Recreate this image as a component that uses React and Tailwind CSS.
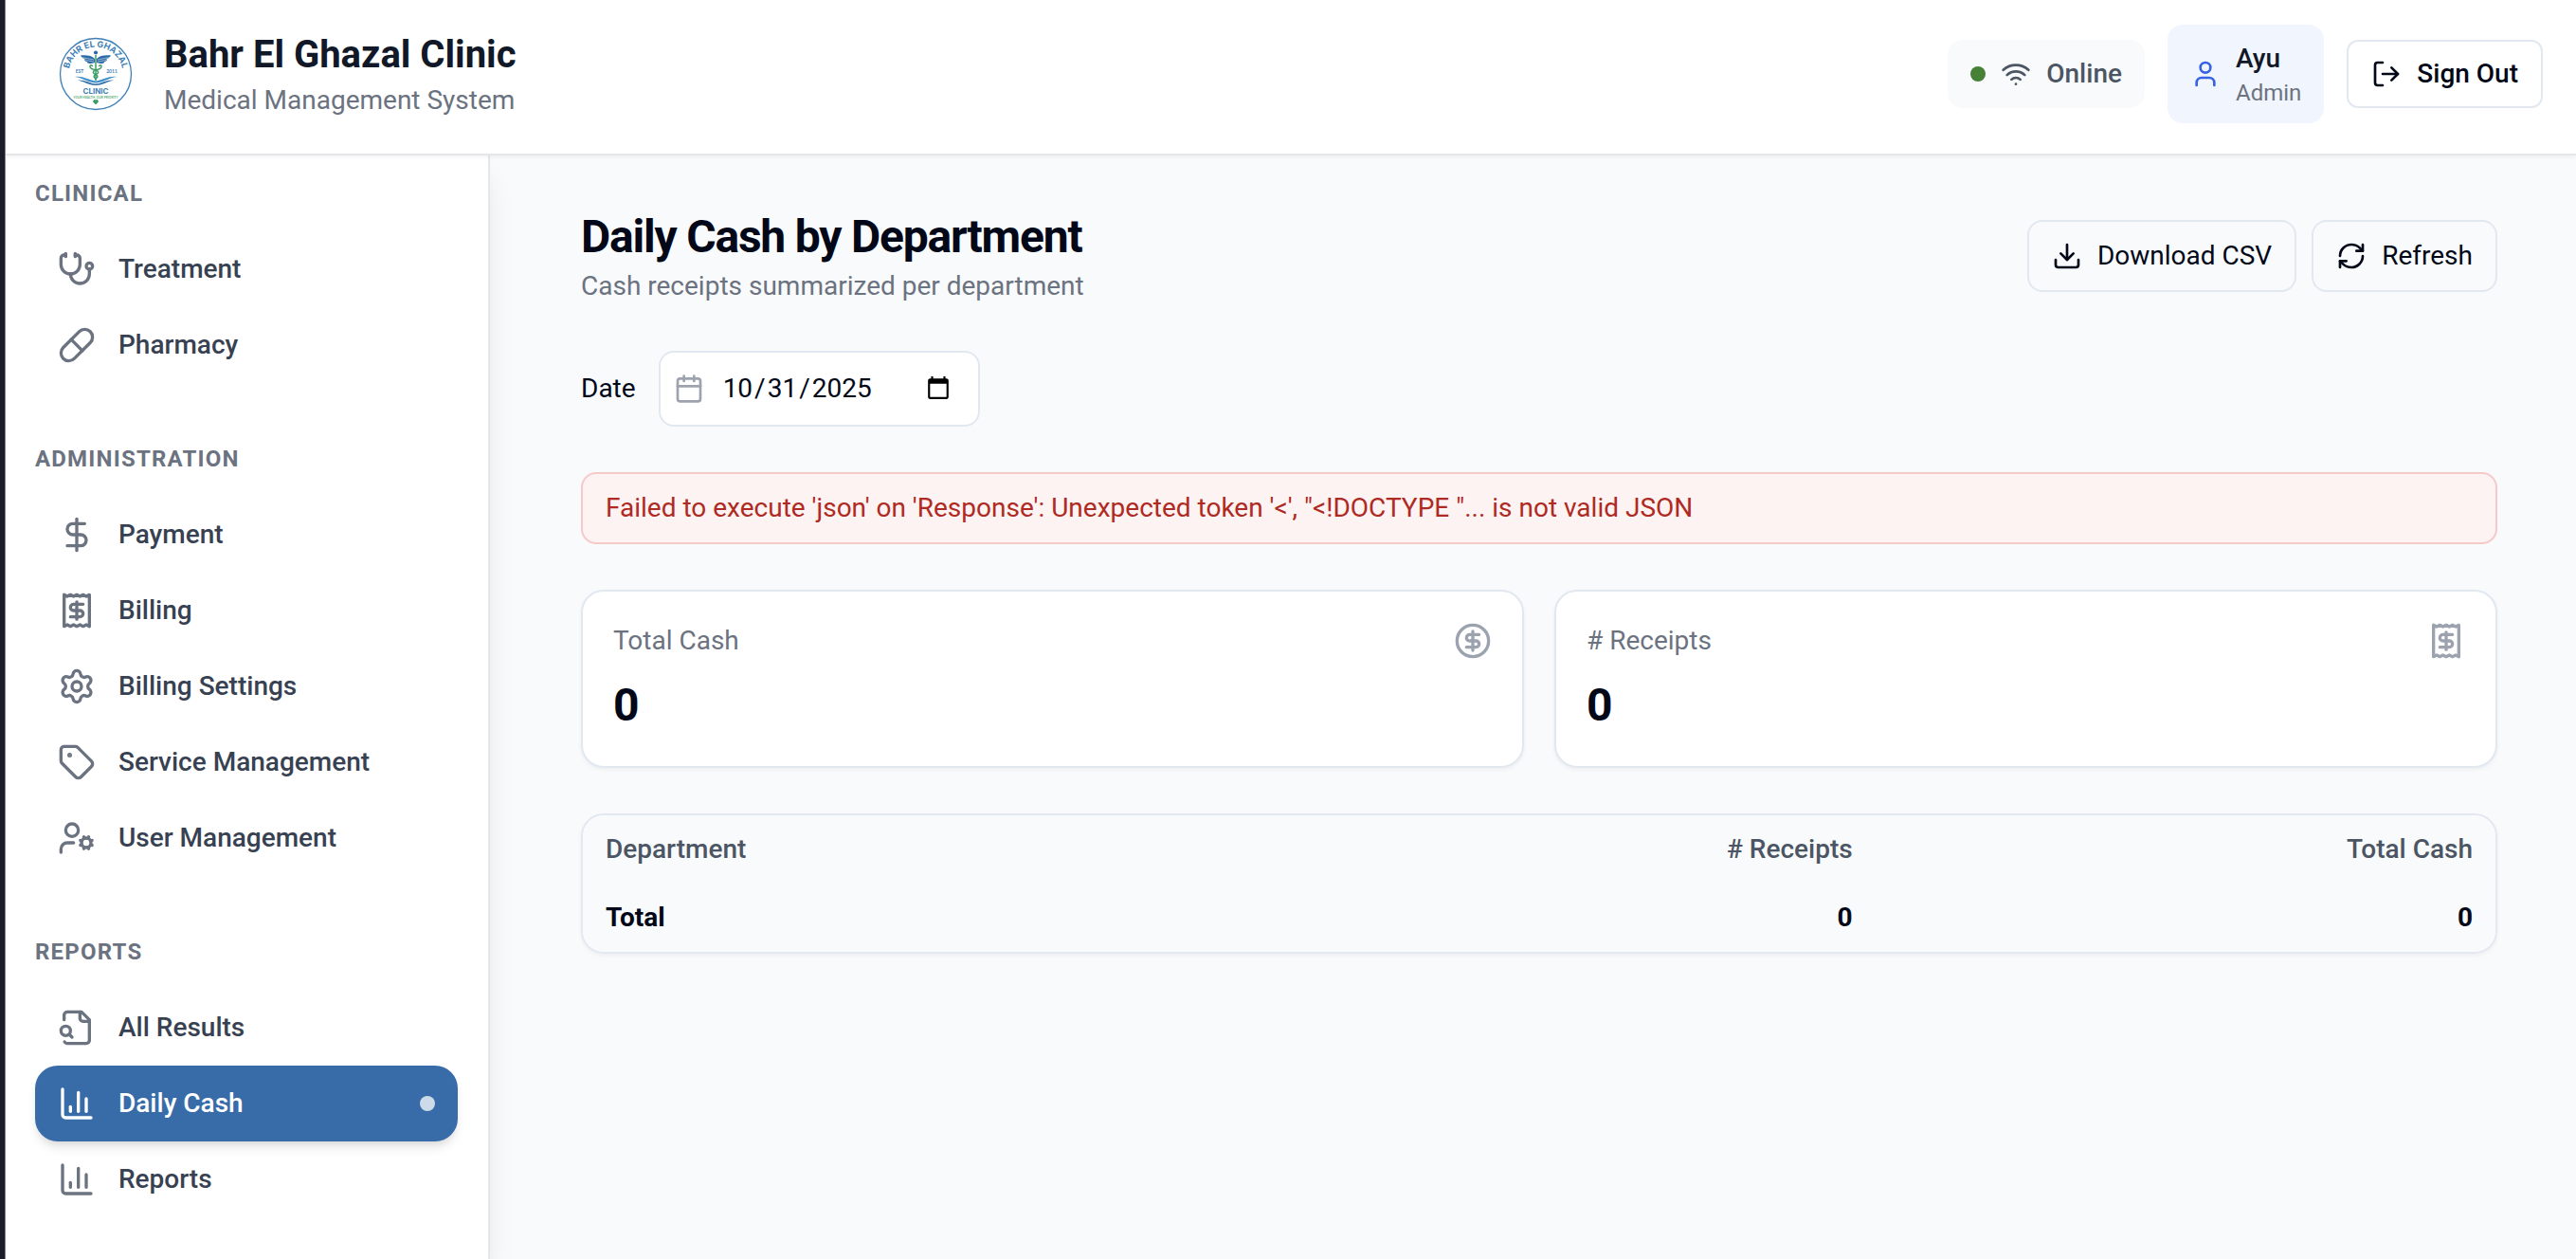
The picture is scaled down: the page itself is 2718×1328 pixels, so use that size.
import {
  Stethoscope, Pill, DollarSign, Settings, Tag, UserCog,
  Wifi, User, LogOut, Download, RefreshCw, Calendar, CircleDollarSign,
} from "lucide-react";

function Glyph({ className, children }) {
  return (
    <svg viewBox="0 0 24 24" fill="none" stroke="currentColor" strokeWidth="2" strokeLinecap="round" strokeLinejoin="round" className={className} aria-hidden="true">
      {children}
    </svg>
  );
}

function ChartBars({ className }) {
  return (
    <Glyph className={className}>
      <path d="M3 3v16a2 2 0 0 0 2 2h16" />
      <path d="M18 17V9" />
      <path d="M13 17V5" />
      <path d="M8 17v-3" />
    </Glyph>
  );
}

function ReceiptDollar({ className }) {
  return (
    <Glyph className={className}>
      <path d="M4 2v20l2-1 2 1 2-1 2 1 2-1 2 1 2-1 2 1V2l-2 1-2-1-2 1-2-1-2 1-2-1-2 1Z" />
      <path d="M16 8h-6a2 2 0 1 0 0 4h4a2 2 0 1 1 0 4H8" />
      <path d="M12 17.5v-11" />
    </Glyph>
  );
}

function FileLens({ className }) {
  return (
    <Glyph className={className}>
      <path d="M14 2v4a2 2 0 0 0 2 2h4" />
      <path d="M4.268 21a2 2 0 0 0 1.727 1H18a2 2 0 0 0 2-2V7l-5-5H6a2 2 0 0 0-2 2v3" />
      <path d="m9 18-1.5-1.5" />
      <circle cx="5" cy="14" r="3" />
    </Glyph>
  );
}

function Logo() {
  return (
    <svg viewBox="0 0 80 80" className="size-20 shrink-0" role="img" aria-label="Bahr El Ghazal Clinic">
      <circle cx="40" cy="40" r="37.5" fill="#fff" stroke="#3f7fb5" strokeWidth="1.3" />
      <path id="logo-arc" d="M12 46A28.600 28.600 0 1 1 68 46" fill="none" />
      <text fontFamily="Inter, sans-serif" fontWeight="700" fontSize="9" fill="#3f7fb5" textAnchor="middle">
        <textPath href="#logo-arc" startOffset="50%">BAHR EL GHAZAL</textPath>
      </text>
      <circle cx="40" cy="17.5" r="2.1" fill="#2d6ba6" />
      <path d="M39 24C36 20.500 30 20 24 20.500C25 23 27 24 29 24C27.500 24.500 28 27 31 27C30 28.500 33 30 39 28Z" fill="#2d6ba6" />
      <path d="M41 24C44 20.500 50 20 56 20.500C55 23 53 24 51 24C52.500 24.500 52 27 49 27C50 28.500 47 30 41 28Z" fill="#2d6ba6" />
      <path d="M25 22.500L38 25M29 25.500L38 27" stroke="#fff" strokeWidth="0.5" />
      <path d="M55 22.500L42 25M51 25.500L42 27" stroke="#fff" strokeWidth="0.5" />
      <path d="M40 20V47" stroke="#3c9c63" strokeWidth="1.5" />
      <path d="M36.500 31.500C33 29 33 34 37 35C44 36.500 44 39 40 40.500C37 42 37.500 44 40.500 45M43.500 31.500C47 29 47 34 43 35C36 36.500 36 39 40 40.500C43 42 42.500 44 39.500 45" fill="none" stroke="#3c9c63" strokeWidth="1.4" strokeLinecap="round" />
      <text x="23" y="39" fontFamily="Lato, sans-serif" fontWeight="700" fontSize="5" fill="#3f7fb5" textAnchor="middle">EST</text>
      <text x="57" y="39" fontFamily="Lato, sans-serif" fontWeight="700" fontSize="5" fill="#3f7fb5" textAnchor="middle">2011</text>
      <path d="M18 43C27 42 32 46.500 40 47.500C48 46.500 53 42 62 43C54 44 50 48.500 40 49.500C30 48.500 26 44 18 43Z" fill="#3f8fc9" />
      <path d="M21 46.500C29 46 33 50 40 50.500C47 50 51 46 59 46.500C52 48 48 51.500 40 52C32 51.500 28 48 21 46.500Z" fill="#2d6ba6" />
      <text x="40" y="60.500" fontFamily="Inter, sans-serif" fontWeight="700" fontSize="8" fill="#3f7fb5" textAnchor="middle">CLINIC</text>
      <text x="40" y="65.500" fontFamily="Lato, sans-serif" fontWeight="700" fontSize="3.300" fill="#5cae7c" textAnchor="middle">YOUR HEALTH, OUR PRIORITY</text>
      <path d="M40 72L37.700 69.700A1.400 1.400 0 0 1 40 68A1.400 1.400 0 0 1 42.300 69.700Z" fill="#3c9c63" stroke="#3c9c63" strokeWidth="0.7" />
    </svg>
  );
}

const sections = [
  { title: "CLINICAL", items: [["Treatment", Stethoscope], ["Pharmacy", Pill]] },
  {
    title: "ADMINISTRATION",
    items: [
      ["Payment", DollarSign],
      ["Billing", ReceiptDollar],
      ["Billing Settings", Settings],
      ["Service Management", Tag],
      ["User Management", UserCog],
    ],
  },
  { title: "REPORTS", items: [["All Results", FileLens], ["Daily Cash", ChartBars], ["Reports", ChartBars]] },
];

function NavItem({ label, icon: Icon, active }) {
  return (
    <li>
      <a
        href="#"
        aria-current={active ? "page" : undefined}
        className={
          active
            ? "flex h-20 items-center gap-6 rounded-3xl bg-[#386ca9] px-6 font-medium text-white shadow-[0_8px_12px_-2px_rgba(0,0,0,0.1),0_4px_8px_-4px_rgba(0,0,0,0.1)]"
            : "flex h-20 items-center gap-6 rounded-3xl px-6 font-medium text-[#374151]"
        }
      >
        <Icon className={active ? "size-10 shrink-0" : "size-10 shrink-0 text-[#6b7280]"} />
        <span className="flex-1">{label}</span>
        {active && <span className="size-4 rounded-full bg-white/75" />}
      </a>
    </li>
  );
}

function StatCard({ label, value, icon: Icon }) {
  return (
    <section className="rounded-3xl border-2 border-slate-200 bg-white p-8 shadow-[0_2px_4px_rgba(0,0,0,0.05)]">
      <div className="flex items-center justify-between">
        <h2 className="text-[#6b7280]">{label}</h2>
        <Icon className="size-10 text-[#9ca3af]" />
      </div>
      <p className="mt-4 text-5xl leading-16 font-bold">{value}</p>
    </section>
  );
}

export default function App() {
  return (
    <div className="flex min-h-screen bg-[#f9fafc] font-['Roboto',sans-serif] text-[28px] leading-10 text-[#020817]">
      <div className="z-20 w-[5px] shrink-0 bg-[#1a1c27] shadow-[1px_0_0_#85858f]" />
      <div className="flex min-w-0 flex-1 flex-col">
        <header className="z-10 flex items-center justify-between border-b-2 border-gray-200 bg-white pt-[26px] pr-[35px] pb-8 pl-14 shadow-[0_2px_4px_rgba(0,0,0,0.05)]">
          <div className="flex items-center gap-8">
            <Logo />
            <div>
              <p className="text-[40px] leading-14 font-bold text-[#111827]">Bahr El Ghazal Clinic</p>
              <p className="text-[#6b7280]">Medical Management System</p>
            </div>
          </div>
          <div className="flex items-center gap-6">
            <div className="flex items-center gap-4 rounded-2xl bg-[#f9fafc] px-6 py-4 font-medium text-[#4b5563]">
              <span className="size-4 rounded-full bg-[#478138]" />
              <Wifi className="size-8" />
              <span>Online</span>
            </div>
            <div className="flex items-center gap-4 rounded-2xl bg-[#f0f5fe] px-6 py-4">
              <User className="size-8 text-[#3662e3]" />
              <div>
                <p className="font-medium text-[#111827]">Ayu</p>
                <p className="text-2xl leading-8 text-[#6b7280]">Admin</p>
              </div>
            </div>
            <button className="flex h-18 items-center gap-4 rounded-xl border-2 border-slate-200 bg-white px-6 font-medium">
              <LogOut className="size-8" />
              Sign Out
            </button>
          </div>
        </header>

        <div className="flex flex-1">
          <nav className="flex w-[512px] shrink-0 flex-col gap-16 border-r-2 border-gray-200 bg-white px-8 pt-6 shadow-[0_20px_30px_-6px_rgba(0,0,0,0.1),0_8px_12px_-8px_rgba(0,0,0,0.1)]">
            {sections.map((section) => (
              <section key={section.title}>
                <h2 className="mb-6 text-2xl leading-8 font-bold tracking-wider text-[#6b7280]">{section.title}</h2>
                <ul>
                  {section.items.map(([label, icon]) => (
                    <NavItem key={label} label={label} icon={icon} active={label === "Daily Cash"} />
                  ))}
                </ul>
              </section>
            ))}
          </nav>

          <main className="flex min-w-0 flex-1 flex-col gap-12 pt-[54px] pr-[83px] pl-24">
            <div className="flex items-center justify-between">
              <div>
                <h1 className="text-5xl leading-16 font-bold tracking-tight">Daily Cash by Department</h1>
                <p className="text-[#6b7280]">Cash receipts summarized per department</p>
              </div>
              <div className="flex gap-4">
                <button className="flex items-center gap-4 rounded-2xl border-2 border-slate-200 px-6 py-4">
                  <Download className="size-8" />
                  Download CSV
                </button>
                <button className="flex items-center gap-4 rounded-2xl border-2 border-slate-200 px-6 py-4">
                  <RefreshCw className="size-8" />
                  Refresh
                </button>
              </div>
            </div>

            <div className="flex items-center gap-6">
              <label htmlFor="date">Date</label>
              <div className="relative">
                <Calendar className="absolute top-6 left-4 size-8 text-[#9ca3af]" />
                <input
                  id="date"
                  type="date"
                  defaultValue="2025-10-31"
                  className="h-20 w-[339px] rounded-2xl border-2 border-slate-200 bg-white pr-[26px] pl-16 [&::-webkit-datetime-edit-day-field]:px-[2px] [&::-webkit-datetime-edit-month-field]:px-[2px] [&::-webkit-datetime-edit-year-field]:px-[2px]"
                />
              </div>
            </div>

            <p role="alert" className="rounded-2xl border-2 border-[#f5c9c8] bg-[#fdf3f2] px-6 py-4 text-[#ae2a23]">
              Failed to execute 'json' on 'Response': Unexpected token '&lt;', "&lt;!DOCTYPE "... is not valid JSON
            </p>

            <div className="grid grid-cols-2 gap-8">
              <StatCard label="Total Cash" value="0" icon={CircleDollarSign} />
              <StatCard label="# Receipts" value="0" icon={ReceiptDollar} />
            </div>

            <div className="overflow-hidden rounded-3xl border-2 border-slate-200 shadow-[0_2px_4px_rgba(0,0,0,0.05)]">
              <table className="w-full bg-[#f9fafc]">
                <thead className="text-[#4b5563]">
                  <tr>
                    <th className="px-6 py-4 text-left font-medium">Department</th>
                    <th className="px-6 py-4 text-right font-medium"># Receipts</th>
                    <th className="px-6 py-4 text-right font-medium">Total Cash</th>
                  </tr>
                </thead>
                <tfoot>
                  <tr>
                    <th scope="row" className="px-6 py-4 text-left font-bold">Total</th>
                    <td className="px-6 py-4 text-right font-bold">0</td>
                    <td className="px-6 py-4 text-right font-bold">0</td>
                  </tr>
                </tfoot>
              </table>
            </div>
          </main>
        </div>
      </div>
    </div>
  );
}
